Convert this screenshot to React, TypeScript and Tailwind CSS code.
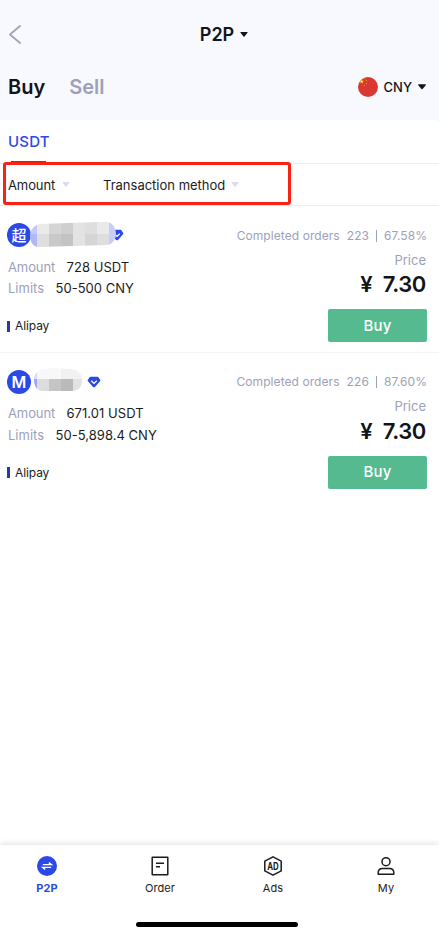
import React from "react";

function Caret({ className }: { className: string }) {
  return (
    <svg viewBox="0 0 9 6" className={className} fill="currentColor">
      <path d="M.8 0h7.4c.6 0 .8.5.5.9L5.1 5.3c-.3.4-.9.4-1.2 0L.3.9C0 .5.2 0 .8 0z" />
    </svg>
  );
}

function Gem() {
  return (
    <svg viewBox="0 0 14 12" className="h-3 w-3.5 shrink-0">
      <path d="M3.6.7h6.8q.5 0 .8.4l2 2.8q.4.5 0 1L8 10.9q-1 .9-2 0L.8 4.9q-.4-.5 0-1l2-2.8q.3-.4.8-.4z" fill="#2c48e5" />
      <path d="M4.2 4.7 7 7.4l2.8-2.7" fill="none" stroke="#fff" strokeWidth="1.3" />
    </svg>
  );
}

function Flag() {
  return (
    <svg viewBox="0 0 20 20" className="size-5">
      <circle cx="10" cy="10" r="10" fill="#d93832" />
      <path d="m3.7 2.2.6 1.6h1.6L4.6 4.9l.5 1.6-1.4-1-1.3 1 .4-1.6-1.2-1.1h1.6z" fill="#ffea20" />
      <g fill="#f5c52b">
        <circle cx="6.7" cy="1.7" r=".5" />
        <circle cx="8.5" cy="3.5" r=".5" />
        <circle cx="8.5" cy="6.4" r=".5" />
        <circle cx="6.4" cy="8.4" r=".5" />
      </g>
    </svg>
  );
}

interface Offer {
  initial: string;
  amount: string;
  limits: string;
  orders: string;
  rate: string;
  mask: React.ReactNode;
}

const wideMask = (
  <svg viewBox="0 0 86 25" className="relative h-[25px] w-[86px] shrink-0" shapeRendering="crispEdges">
    <clipPath id="wide">
      <path d="M10 2 68 0h9c5 0 9 6 9 12s-4 11-10 11L9 25C3 25 0 20 0 14S4 3 10 2z" />
    </clipPath>
    <g clipPath="url(#wide)">
      <path d="M0 0h7v12H0z" fill="#c3c9f8" />
      <path d="M0 12h7v13H0z" fill="#b0b8f5" />
      <path d="M7 0h12v12H7z" fill="#eaeaea" />
      <path d="M7 12h12v13H7z" fill="#dedede" />
      <path d="M19 0h12v12H19z" fill="#d5d5d5" />
      <path d="M19 12h12v13H19z" fill="#c9c9c9" />
      <path d="M31 0h12v12H31z" fill="#cfcfcf" />
      <path d="M31 12h12v13H31z" fill="#c3c3c3" />
      <path d="M43 0h12v25H43z" fill="#e3e3e3" />
      <path d="M55 0h12v12H55z" fill="#dedede" />
      <path d="M55 12h12v13H55z" fill="#d5d5d5" />
      <path d="M67 0h12v12H67z" fill="#eaeaea" />
      <path d="M67 12h12v13H67z" fill="#dedede" />
      <path d="M79 0h7v25h-7z" fill="#c8cef8" />
    </g>
  </svg>
);

const shortMask = (
  <svg viewBox="0 0 48 24" className="h-6 w-12 shrink-0" shapeRendering="crispEdges">
    <clipPath id="short">
      <path d="M10 1 22 0l14 1c8 0 12 5 12 12s-5 10-11 10H9c-6 0-9-5-9-11S4 1 10 1z" />
    </clipPath>
    <g clipPath="url(#short)">
      <path d="M0 0h3v11H0z" fill="#d7dbfa" />
      <path d="M0 11h3v13H0z" fill="#9da8f5" />
      <path d="M3 0h24v11H3z" fill="#f8f8f8" />
      <path d="M27 0h21v11H27z" fill="#f1f1f1" />
      <path d="M3 11h12v13H3z" fill="#dddddd" />
      <path d="M15 11h12v13H15z" fill="#c5c5c5" />
      <path d="M27 11h12v13H27z" fill="#bababa" />
      <path d="M39 11h9v13h-9z" fill="#e2e2e2" />
    </g>
  </svg>
);

const offers: Offer[] = [
  { initial: "超", amount: "728 USDT", limits: "50-500 CNY", orders: "223", rate: "67.58%", mask: <div className="-ml-px -mt-0.5 flex items-center">{wideMask}<div className="-ml-[6px] mt-0.5"><Gem /></div></div> },
  { initial: "M", amount: "671.01 USDT", limits: "50-5,898.4 CNY", orders: "226", rate: "87.60%", mask: <div className="ml-[3px] flex items-center gap-[5px]"><div className="-mt-[3px]">{shortMask}</div><Gem /></div> },
];

function OfferRow({ offer, last }: { offer: Offer; last: boolean }) {
  return (
    <div className={"flex h-[146.5px] justify-between pl-[7px] pr-3 pt-[17px] " + (last ? "" : "border-b border-[#f4f4f6]")}>
      <div>
        <div className="flex h-6 items-center">
          <div className="flex size-6 shrink-0 items-center justify-center rounded-full bg-[#2c48e5] leading-none text-white">
            {offer.initial === "M" ? <span className="text-[16px] font-semibold">M</span> : <span className="-mt-px font-['Noto_Sans_CJK_SC',sans-serif] text-[15px] font-medium">{offer.initial}</span>}
          </div>
          {offer.mask}
        </div>
        <div className="ml-px mt-[10px] flex h-[21px] items-center text-[13px] tracking-[0.05px]">
          <span className="w-[58.5px] tracking-[-0.1px] text-[#9da1b8]">Amount</span>
          <span className="text-[#1b1c20]">{offer.amount}</span>
        </div>
        <div className="ml-px flex h-[22px] items-center text-[13px] tracking-[0.03px]">
          <span className="w-[47.5px] tracking-[0px] text-[#9da1b8]">Limits</span>
          <span className="text-[#1b1c20]">{offer.limits}</span>
        </div>
        <div className="mt-4 flex h-5 items-center gap-[5.5px] text-[12px] text-[#1b1c20]">
          <span className="h-[11px] w-[2.5px] bg-[#253ba8]" />
          <span className="tracking-[-0.1px]">Alipay</span>
        </div>
      </div>
      <div className="flex flex-col items-end">
        <div className="flex h-[25px] items-center text-[12px] tracking-[0.07px] text-[#9da1b8]">
          <span>Completed orders</span>
          <span className="ml-[7px]">{offer.orders}</span>
          <span className="mx-[7px] h-3 w-px bg-[#9da1b8]" />
          <span>{offer.rate}</span>
        </div>
        <div className="flex h-6 items-center pr-px pt-px text-[13px] text-[#9da1b8]">Price</div>
        <div className="flex h-6 items-center gap-[10px] pr-px text-[22px] font-semibold leading-none text-[#131419]">
          <span>¥</span>
          <span className="tracking-[-0.4px]">7.30</span>
        </div>
        <button className="mt-[13px] h-[33px] w-[99px] rounded-[2px] bg-[#55ba90] pt-px text-[15px] font-medium tracking-[0.1px] text-white">Buy</button>
      </div>
    </div>
  );
}

function NavItem({ label, active, children }: { label: string; active?: boolean; children: React.ReactNode }) {
  return (
    <div className={"flex w-20 flex-col items-center pt-[11px] text-[11px] leading-4 tracking-[0.1px] " + (active ? "font-bold text-[#2c48e5]" : "text-[#1b1c20]")}>
      <div className="flex h-5 items-center">{children}</div>
      <span className="mt-1">{label}</span>
    </div>
  );
}

export default function App() {
  return (
    <div className="flex h-[931px] w-[439px] flex-col overflow-hidden bg-white font-['Inter','Noto_Sans_CJK_SC',sans-serif] text-[#131419]">
      <header className="h-[120px] bg-[#f8f9fe]">
        <div className="grid h-[68px] grid-cols-3 items-center pl-[9px] pr-[9px]">
          <svg viewBox="0 0 12 19" className="h-[19px] w-3" fill="none" stroke="#a0a5bb" strokeWidth="1.9" strokeLinecap="round" strokeLinejoin="round">
            <path d="M11 1 1 9.5 11 18" />
          </svg>
          <div className="ml-[9px] flex items-center justify-center gap-1.5 text-[18px] font-semibold">
            P2P
            <Caret className="h-[5px] w-2" />
          </div>
        </div>
        <div className="flex h-[38px] items-center justify-between pl-2 pr-[13px]">
          <div className="flex gap-6 text-[20px] font-semibold">
            <span>Buy</span>
            <span className="text-[#9da1b8]">Sell</span>
          </div>
          <div className="flex items-center text-[13px] font-medium">
            <Flag />
            <span className="ml-[6px] pt-px">CNY</span>
            <Caret className="ml-[6px] h-[6px] w-2" />
          </div>
        </div>
      </header>
      <div className="bg-[#f8f9fe]">
        <div className="relative h-11 rounded-tr-[5px] border-b border-[#ededf0] bg-white pl-2 pt-[11px] text-[15px] font-medium tracking-[0.2px] text-[#2c48e5]">
          USDT
          <span className="absolute bottom-0 left-[11px] h-[2px] w-[35px] bg-[#2c48e5]" />
        </div>
      </div>
      <div className="relative flex h-[42px] items-center border-b border-[#ededf0] pl-2 text-[13px] text-[#1b1c20]">
        <span className="w-[54px] pt-0.5 tracking-[-0.1px]">Amount</span>
        <Caret className="h-[5px] w-2 text-[#d9dcea]" />
        <span className="ml-[33px] pt-0.5">Transaction method</span>
        <Caret className="ml-[6px] h-[5px] w-2 text-[#d9dcea]" />
        <span className="absolute -top-[2px] left-[3px] h-[43px] w-[288px] rounded-[3px] border-3 border-[#fa2115]" />
      </div>
      <main className="flex-1">
        {offers.map((o, i) => (
          <OfferRow key={o.initial} offer={o} last={i === offers.length - 1} />
        ))}
      </main>
      <footer className="h-[86px] bg-white shadow-[0_-1px_6px_rgba(0,0,0,0.13)]">
        <nav className="flex h-[77px] justify-between pl-[7px] pr-[13px]">
          <NavItem label="P2P" active>
            <svg viewBox="0 0 20 20" className="size-5">
              <circle cx="10" cy="10" r="10" fill="#2c48e5" />
              <path d="M5.8 8.6h8.6L11.8 6.6M14.2 11.4H5.7l2.5 2" fill="none" stroke="#fff" strokeWidth="1.4" />
            </svg>
          </NavItem>
          <NavItem label="Order">
            <svg viewBox="0 0 18 20" className="h-5 w-[18px]" fill="none" stroke="#1b1c20" strokeWidth="1.5">
              <rect x="1.2" y="1.2" width="15.6" height="17.6" rx=".4" />
              <path d="M5 7.2h8M5 10.7h4" />
            </svg>
          </NavItem>
          <NavItem label="Ads">
            <svg viewBox="0 0 20 20" className="size-5" fill="none" stroke="#1b1c20" strokeWidth="1.5" strokeLinejoin="round">
              <path d="m10 .8 8.2 4.3v9.8L10 19.2l-8.2-4.3V5.1z" />
              <text x="10" y="13.5" textAnchor="middle" textLength="11.5" lengthAdjust="spacingAndGlyphs" fontSize="10" fontWeight="700" letterSpacing="0" fill="#1b1c20" stroke="none">AD</text>
            </svg>
          </NavItem>
          <NavItem label="My">
            <svg viewBox="0 0 18 20" className="h-5 w-[18px]" fill="none" stroke="#1b1c20" strokeWidth="1.5" strokeLinejoin="round">
              <circle cx="9" cy="5.7" r="4" />
              <path d="M1.2 18.2v-1.4c0-2.6 1.8-4.4 4.3-4.4h7c2.5 0 4.3 1.8 4.3 4.4v1.4z" />
            </svg>
          </NavItem>
        </nav>
        <div className="ml-[136px] h-[5px] w-[162px] rounded-full bg-black" />
      </footer>
    </div>
  );
}
